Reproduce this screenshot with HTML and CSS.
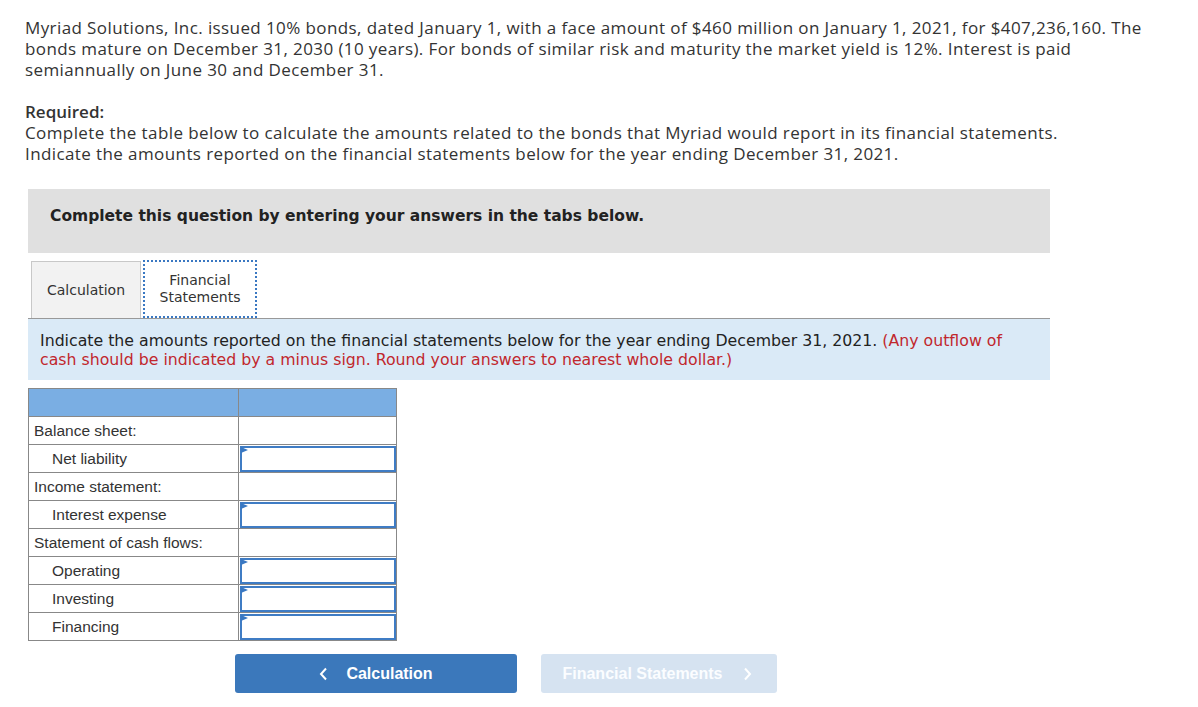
FILE: index.html
```html
<!DOCTYPE html>
<html lang="en">
<head>
  <meta charset="UTF-8">
  <title>Bonds question</title>
  <link rel="stylesheet" href="styles.css">
</head>
<body>

  <div class="page">
    <p class="intro">
      Myriad Solutions, Inc. issued 10% bonds, dated January 1, with a face amount of $460 million on January 1, 2021, for $407,236,160. The<br>
      bonds mature on December 31, 2030 (10 years). For bonds of similar risk and maturity the market yield is 12%. Interest is paid<br>
      semiannually on June 30 and December 31.
    </p>

    <p class="intro">
      <strong>Required:</strong><br>
      Complete the table below to calculate the amounts related to the bonds that Myriad would report in its financial statements.<br>
      Indicate the amounts reported on the financial statements below for the year ending December 31, 2021.
    </p>

    <div class="question">
      <div class="banner">Complete this question by entering your answers in the tabs below.</div>

      <div class="tabs">
        <div class="tab">Calculation</div>
        <div class="tab active">Financial<br>Statements</div>
      </div>

      <div class="instructions">
        Indicate the amounts reported on the financial statements below for the year ending December 31, 2021.
        <span class="hint">(Any outflow of<br>cash should be indicated by a minus sign. Round your answers to nearest whole dollar.)</span>
      </div>

      <table class="answers">
        <tr class="head"><th></th><th></th></tr>
        <tr><td>Balance sheet:</td><td></td></tr>
        <tr><td class="sub">Net liability</td><td class="field"><div class="box"></div></td></tr>
        <tr><td>Income statement:</td><td></td></tr>
        <tr><td class="sub">Interest expense</td><td class="field"><div class="box"></div></td></tr>
        <tr><td>Statement of cash flows:</td><td></td></tr>
        <tr><td class="sub">Operating</td><td class="field"><div class="box"></div></td></tr>
        <tr><td class="sub">Investing</td><td class="field"><div class="box"></div></td></tr>
        <tr><td class="sub">Financing</td><td class="field"><div class="box"></div></td></tr>
      </table>

      <div class="nav">
        <button class="btn prev">
          <svg class="chev" width="9" height="14" viewBox="0 0 9 14"><path d="M7 1.5 L2 7 L7 12.5" fill="none" stroke="#fff" stroke-width="2"/></svg>
          Calculation
        </button>
        <button class="btn next">
          Financial Statements
          <svg class="chev" width="9" height="14" viewBox="0 0 9 14"><path d="M2 1.5 L7 7 L2 12.5" fill="none" stroke="#fff" stroke-width="2"/></svg>
        </button>
      </div>
    </div>
  </div>

</body>
</html>
```

FILE: styles.css
```css
body {
  margin: 0;
  background: #fff;
  color: #333;
}

.page {
  padding: 17px 25px;
}

.intro {
  margin: 0 0 21px;
  font-family: 'Open Sans', 'Liberation Sans', sans-serif;
  font-size: 17px;
  line-height: 21px;
  letter-spacing: 0.4px;
  color: #333;
  white-space: nowrap;
}

.intro strong {
  font-weight: 600;
  letter-spacing: 0;
}

.question {
  margin: 25px 0 0 3px;
  width: 1022px;
}

.banner {
  background: #e0e0e0;
  height: 64px;
  box-sizing: border-box;
  padding: 18px 22px 0;
  font-family: 'DejaVu Sans', Verdana, sans-serif;
  font-weight: bold;
  font-size: 15.5px;
  line-height: 18px;
  color: #222;
}

.tabs {
  display: flex;
  gap: 2px;
  margin-top: 8px;
  padding-left: 3px;
  border-bottom: 1px solid #999;
}

.tab {
  width: 110px;
  height: 57px;
  box-sizing: border-box;
  background: #f2f2f2;
  border: 1px solid #c8c8c8;
  border-bottom: none;
  display: flex;
  align-items: center;
  justify-content: center;
  text-align: center;
  font-family: 'DejaVu Sans', Verdana, sans-serif;
  font-size: 14px;
  line-height: 17px;
  color: #333;
}

.tab.active {
  width: 114px;
  height: 58px;
  margin-top: -1px;
  background: #fff;
  border: 2px dotted #3a78c2;
}

.instructions {
  background: #daeaf7;
  padding: 12px 12px 11px;
  font-family: 'DejaVu Sans', Verdana, sans-serif;
  font-size: 15.75px;
  line-height: 19px;
  color: #222;
  white-space: nowrap;
}

.hint {
  color: #c1272d;
}

.answers {
  margin-top: 8px;
  border-collapse: collapse;
  font-family: 'Liberation Sans', Arial, sans-serif;
  font-size: 15.5px;
  color: #333;
}

.answers th,
.answers td {
  border: 1px solid #888;
  height: 27px;
  padding: 0 5px;
  box-sizing: border-box;
}

.answers tr {
  height: 28px;
}

.answers th {
  background: #7aaee3;
}

.answers td:first-child {
  width: 210px;
}

.answers td:last-child,
.answers th:last-child {
  width: 158px;
}

.answers td.sub {
  padding-left: 23px;
}

.answers td.field {
  padding: 0;
  position: relative;
}

.box {
  height: 26px;
  box-sizing: border-box;
  border: 2px solid #3f7cc4;
  background: #fff;
  margin: 0 0 0 1px;
}

.field::before {
  content: "";
  position: absolute;
  left: 2px;
  top: 2px;
  border-top: 3.5px solid transparent;
  border-bottom: 3.5px solid transparent;
  border-left: 7px solid #3a78c2;
}

.nav {
  display: flex;
  gap: 24px;
  margin: 13px 0 0 207px;
}

.btn {
  height: 39px;
  border: none;
  border-radius: 3px;
  display: flex;
  align-items: center;
  justify-content: center;
  gap: 18px;
  font-family: 'Liberation Sans', Arial, sans-serif;
  font-weight: bold;
  font-size: 16px;
  color: #fff;
}

.prev {
  width: 282px;
  background: #3b78bb;
}

.next {
  width: 236px;
  background: #d6e3f1;
  color: #fbfdff;
  gap: 20px;
  padding-left: 2px;
}
```
